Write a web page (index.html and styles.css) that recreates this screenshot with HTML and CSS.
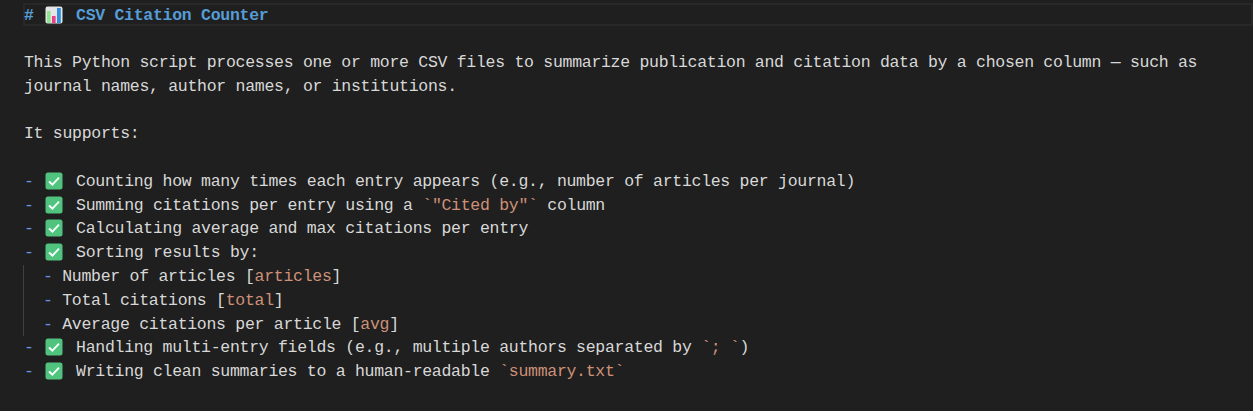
FILE: index.html
```html
<!DOCTYPE html>
<html lang="en">
<head>
<meta charset="utf-8">
<title>CSV Citation Counter</title>
<link rel="stylesheet" href="styles.css">
</head>
<body>
<svg class="defs" width="0" height="0" aria-hidden="true">
  <defs>
    <symbol id="check" viewBox="0 0 18 18">
      <rect x="0.5" y="0.5" width="17" height="17" rx="2.5" fill="#50c37f"/>
      <path d="M4 9.4 7.4 12.6 14 5.6" fill="none" stroke="#f4fff8" stroke-width="2"/>
    </symbol>
  </defs>
</svg>
<main class="editor">
  <div class="line current"><span class="heading"># <svg class="emoji chart" viewBox="0 0 18 18"><rect x="0.5" y="0.5" width="17" height="17" rx="2" fill="#e6e4e6"/><rect x="2" y="5" width="3.6" height="12" fill="#8ee58f"/><rect x="7" y="10" width="3.6" height="7" fill="#ec3f87"/><rect x="12" y="2" width="3.8" height="15" fill="#2f8fd8"/></svg> CSV Citation Counter</span></div>
  <div class="line"></div>
  <div class="line">This Python script processes one or more CSV files to summarize publication and citation data by a chosen column — such as</div>
  <div class="line">journal names, author names, or institutions.</div>
  <div class="line"></div>
  <div class="line">It supports:</div>
  <div class="line"></div>
  <div class="line"><span class="dash">-</span> <svg class="emoji"><use href="#check"/></svg> Counting how many times each entry appears (e.g., number of articles per journal)</div>
  <div class="line"><span class="dash">-</span> <svg class="emoji"><use href="#check"/></svg> Summing citations per entry using a <span class="code">`"Cited by"`</span> column</div>
  <div class="line"><span class="dash">-</span> <svg class="emoji"><use href="#check"/></svg> Calculating average and max citations per entry</div>
  <div class="line"><span class="dash">-</span> <svg class="emoji"><use href="#check"/></svg> Sorting results by:</div>
  <div class="nested">
    <div class="line"><span class="dash">-</span> Number of articles [<span class="code">articles</span>]</div>
    <div class="line"><span class="dash">-</span> Total citations [<span class="code">total</span>]</div>
    <div class="line"><span class="dash">-</span> Average citations per article [<span class="code">avg</span>]</div>
  </div>
  <div class="line"><span class="dash">-</span> <svg class="emoji"><use href="#check"/></svg> Handling multi-entry fields (e.g., multiple authors separated by <span class="code">`; `</span>)</div>
  <div class="line"><span class="dash">-</span> <svg class="emoji"><use href="#check"/></svg> Writing clean summaries to a human-readable <span class="code">`summary.txt`</span></div>
</main>
</body>
</html>
```

FILE: styles.css
```css
html, body {
  margin: 0;
  height: 100%;
  background: #1f1f1f;
  overflow: hidden;
}
.defs {
  position: absolute;
}
.editor {
  padding: 3px 0 0 24px;
  font-family: "Liberation Mono", "DejaVu Sans Mono", monospace;
  font-size: 16.5px;
  letter-spacing: -0.285px;
  line-height: 23.8px;
  color: #d8d8d8;
}
.line {
  height: 23.8px;
  white-space: pre;
}
.current {
  box-sizing: border-box;
  height: 23px;
  margin: 0 0 1px -1px;
  padding: 1px 0 0 1px;
  box-shadow: inset 0 0 0 2px #282828;
}
.heading {
  color: #569cd6;
  font-weight: 700;
}
.dash {
  color: #6796e6;
}
.code {
  color: #ce9178;
}
.emoji {
  display: inline-block;
  width: 18px;
  height: 18px;
  margin: 0 3.2px 0 2px;
  vertical-align: -4px;
}
.nested {
  margin-left: -1px;
  padding-left: 19px;
  border-left: 1px solid #404040;
}
```
